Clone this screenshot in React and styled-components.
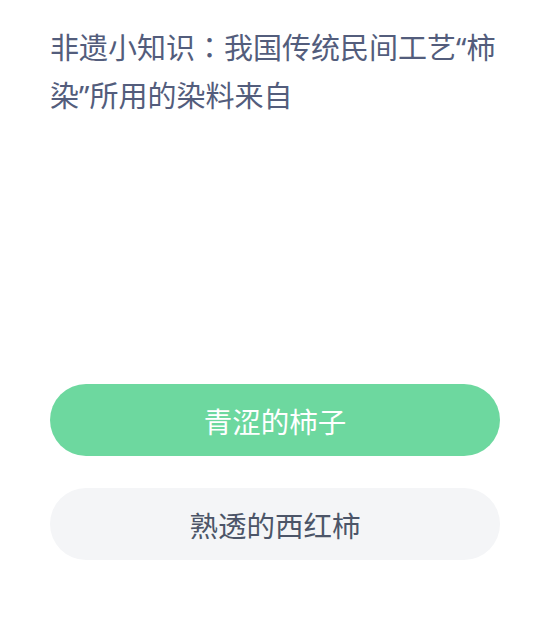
import React from "react";
import styled, { createGlobalStyle } from "styled-components";

const GlobalStyle = createGlobalStyle`
  html, body {
    margin: 0;
    padding: 0;
    background: #ffffff;
  }
  body {
    font-family: "Noto Sans CJK SC", "Noto Sans", sans-serif;
  }
`;

const Page = styled.div`
  width: 540px;
  height: 618px;
  box-sizing: border-box;
  padding: 24px 40px 0 50px;
  display: flex;
  flex-direction: column;
`;

const Question = styled.div`
  font-family: "Noto Sans", "Noto Sans CJK SC", sans-serif;
  font-size: 29px;
  line-height: 48px;
  height: 96px;
  color: #535d7c;
  margin-right: -10px;
`;

// full-width colon drawn centred in its cell, as in the source
const Colon = styled.span`
  font-family: "Noto Sans CJK TC", sans-serif;
  line-height: 1;
`;

const Options = styled.div`
  display: flex;
  flex-direction: column;
  gap: 32px;
  margin-top: 264px;
`;

const Option = styled.div`
  height: 72px;
  border-radius: 36px;
  display: flex;
  align-items: center;
  justify-content: center;
  font-size: 28.5px;
  background: ${(p) => (p.$chosen ? "#6dd89f" : "#f4f5f7")};
  color: ${(p) => (p.$chosen ? "#ffffff" : "#4c5568")};
`;

const options = [
  { text: "青涩的柿子", chosen: true },
  { text: "熟透的西红柿", chosen: false },
];

export default function App() {
  return (
    <>
      <GlobalStyle />
      <Page>
        <Question>
          非遗小知识<Colon>：</Colon>我国传统民间工艺“柿染”所用的染料来自
        </Question>
        <Options>
          {options.map((o) => (
            <Option key={o.text} $chosen={o.chosen}>
              {o.text}
            </Option>
          ))}
        </Options>
      </Page>
    </>
  );
}
